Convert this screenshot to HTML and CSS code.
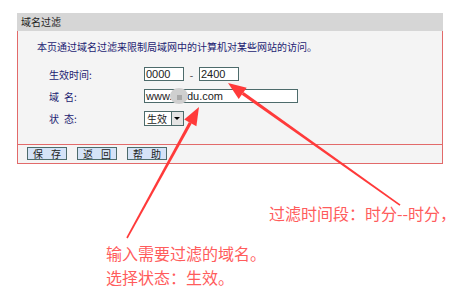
FILE: index.html
```html
<!DOCTYPE html>
<html>
	<head>
		<meta charset="utf-8">
		<title>域名过滤</title>
		<link rel="stylesheet" href="styles.css">
	</head>
	<body>
		<div class="panel">
			<div class="head">域名过滤</div>
			<div class="main">
				<p class="desc">本页通过域名过滤来限制局域网中的计算机对某些网站的访问。</p>
				<div class="form">
					<div class="label">生效时间:</div>
					<div class="field">
						<span class="input short">0000</span>
						<span class="dash">-</span>
						<span class="input short">2400</span>
					</div>
					<div class="label">域&ensp;名:</div>
					<div class="field">
						<span class="input long">www.baidu.com<i class="blur"></i></span>
					</div>
					<div class="label">状&ensp;态:</div>
					<div class="field">
						<span class="select"><span class="opt">生效</span><span class="drop"></span></span>
					</div>
				</div>
			</div>
			<div class="bar">
				<span class="btn">保 存</span>
				<span class="btn">返 回</span>
				<span class="btn">帮 助</span>
			</div>
		</div>

		<!-- 标注 -->
		<svg class="marks" width="475" height="298" viewBox="0 0 475 298">
			<polygon points="228,83 238.7,99.1 246.7,87.7" />
			<polygon points="241.8,94.7 243.6,92.1 400.5,204.4 399.5,205.7" />
			<polygon points="199,107 184.2,119.4 196.4,126.2" />
			<polygon points="188.9,122.0 191.7,123.6 127.7,238.4 126.3,237.6" />
		</svg>
		<div class="note note_time">过滤时间段：时分--时分，</div>
		<div class="note note_name">输入需要过滤的域名。<br>选择状态：生效。</div>
	</body>
</html>
```

FILE: styles.css
```css
body {
	margin: 0;
	padding: 13px 0 0 17px;
	background: #fff;
	font-family: "Noto Sans CJK SC", sans-serif;
}

.panel {
	width: 426px;
	font-size: 10px;
}

.head {
	height: 18px;
	line-height: 18px;
	padding-left: 4px;
	background-color: #d6d6d6;
	color: #222;
}

.main {
	background-color: #f4f4f4;
	border: 1px solid #e26a6a;
	border-top: none;
	border-bottom: none;
	padding: 10px 0 15px 19px;
}

.desc {
	margin: 0;
	line-height: 12px;
	color: #1c1c72;
}

.form {
	margin-top: 10px;
	display: grid;
	grid-template-columns: 95px auto;
	grid-auto-rows: 22px;
	padding-left: 12px;
	color: #1c1c72;
}

.label,
.field {
	display: flex;
	align-items: center;
}

.input {
	box-sizing: border-box;
	height: 14px;
	line-height: 12px;
	border: 1px solid #4d6b6b;
	background: #fff;
	padding-left: 1px;
	font-family: "Liberation Sans", sans-serif;
	font-size: 11px;
	color: #222;
}

.input.short {
	width: 40px;
}

.input.long {
	width: 154px;
	position: relative;
}

.dash {
	width: 15px;
	text-align: center;
	color: #333;
}

.blur {
	position: absolute;
	left: 25px;
	top: -2px;
	width: 18px;
	height: 16px;
	border-radius: 50%;
	background: #cfcfcf;
}

.blur::after {
	content: "";
	position: absolute;
	left: 7px;
	top: 7px;
	width: 5px;
	height: 5px;
	background: #a8a8a8;
}

.select {
	box-sizing: border-box;
	display: flex;
	width: 40px;
	height: 15px;
	border: 1px solid #4d6b6b;
	background: #fff;
}

.opt {
	flex: 1;
	line-height: 13px;
	padding-left: 2px;
	color: #222;
}

.drop {
	box-sizing: border-box;
	width: 12px;
	border-left: 1px solid #4d6b6b;
	background: #e4e4e4;
	position: relative;
}

.drop::after {
	content: "";
	position: absolute;
	left: 2px;
	top: 5px;
	border-left: 3px solid transparent;
	border-right: 3px solid transparent;
	border-top: 3px solid #000;
}

.bar {
	background-color: #f4f4f4;
	border: 1px solid #e26a6a;
	display: flex;
	gap: 10px;
	padding: 2px 0 3px 9px;
}

.btn {
	box-sizing: border-box;
	width: 40px;
	height: 13px;
	line-height: 11px;
	border: 1px solid #4d6b6b;
	background-color: #d5e3f7;
	text-align: center;
	letter-spacing: 3px;
	text-indent: 3px;
	color: #222;
}

.marks {
	position: absolute;
	left: 0;
	top: 0;
	fill: #ff3a3a;
}

.note {
	position: absolute;
	font-size: 16px;
	line-height: 24px;
	color: #ff5c5c;
}

.note_time {
	left: 269px;
	top: 201px;
}

.note_name {
	left: 106px;
	top: 241px;
}
```
